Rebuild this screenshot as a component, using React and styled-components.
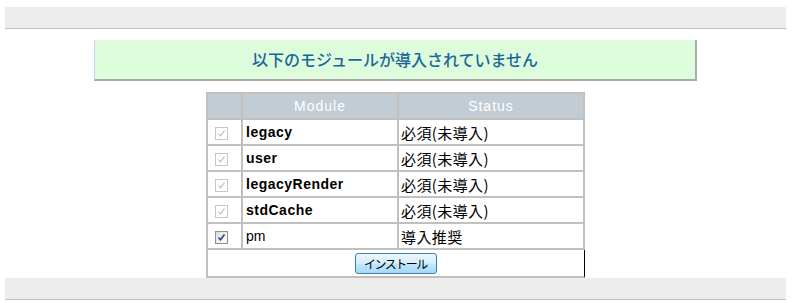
import styled, { createGlobalStyle } from "styled-components";

const GlobalStyle = createGlobalStyle`
  body {
    margin: 0;
    background: #ffffff;
    font-family: "Liberation Sans", "Noto Sans CJK JP", sans-serif;
  }
`;

const Page = styled.div`
  padding: 7px 6px 0 5px;
`;

const Bar = styled.div`
  height: 21px;
  background: #ededed;
  border-bottom: 1px solid #bdbdbd;
`;

const Content = styled.div`
  display: flex;
  flex-direction: column;
  align-items: center;
  padding-top: 11px;
`;

const Notice = styled.div`
  box-sizing: border-box;
  width: 603px;
  height: 41px;
  display: flex;
  align-items: center;
  justify-content: center;
  background: #dcfcdc;
  border-left: 1px solid #ccccff;
  border-right: 2px solid #aaaaaa;
  border-bottom: 2px solid #aaaaaa;
  color: #1a6699;
  font-family: "Noto Sans CJK JP", sans-serif;
  font-size: 16px;
  font-weight: 500;
  letter-spacing: 0;
  padding-bottom: 1px;
`;

const Table = styled.table`
  margin-top: 11px;
  border-collapse: separate;
  border-spacing: 0;
  border-top: 2px solid #c0c0c0;
  border-left: 2px solid #c0c0c0;
`;

const Th = styled.th`
  height: 24px;
  padding: 0;
  width: ${(p) => p.$w}px;
  background: #c2ccd5;
  color: #ffffff;
  font-family: "Liberation Sans", sans-serif;
  font-size: 14px;
  font-weight: normal;
  letter-spacing: 1px;
  text-align: center;
  border-right: 2px solid #c0c0c0;
  border-bottom: 2px solid #c0c0c0;
`;

const Td = styled.td`
  height: 24px;
  padding: 0 0 0 ${(p) => p.$pad ?? 3}px;
  border-right: 2px solid #c0c0c0;
  border-bottom: 2px solid #c0c0c0;
  font-family: "Liberation Sans", sans-serif;
  font-size: 14px;
  letter-spacing: ${(p) => (p.$bold ? "0.5px" : "0")};
  font-weight: ${(p) => (p.$bold ? "bold" : "normal")};
  color: #000000;
  vertical-align: middle;
`;

const StatusTd = styled(Td)`
  font-family: "Noto Sans CJK JP", sans-serif;
  font-size: 15px;
  padding-left: 2px;
  letter-spacing: 0.4px;
`;

const ButtonTd = styled.td`
  height: 26px;
  padding: 0 1px 0 0;
  text-align: center;
  border-right: 1px solid #000000;
  border-bottom: 2px solid #c0c0c0;
  vertical-align: middle;
`;

const Box = styled.span`
  display: inline-flex;
  align-items: center;
  justify-content: center;
  box-sizing: border-box;
  width: 13px;
  height: 13px;
  margin-left: 2px;
  margin-top: 2px;
  vertical-align: middle;
  border: 1px solid ${(p) => (p.$on ? "#8e8f8f" : "#c6c6c6")};
  background: ${(p) =>
    p.$on ? "linear-gradient(135deg, #dcdcdc, #ffffff)" : "#ffffff"};
`;

const Button = styled.button`
  width: 82px;
  height: 21px;
  padding: 0 0 1px;
  border: 1px solid #3c7fb1;
  border-radius: 3px;
  background: linear-gradient(#eaf6fd 0%, #d9f0fc 45%, #bee6fd 55%, #a7d9f5 100%);
  font-family: "Noto Sans CJK JP", sans-serif;
  font-size: 12px;
  letter-spacing: -1.5px;
  color: #000000;
  margin-top: 1px;
`;

const Footer = styled.div`
  height: 21px;
  background: #ededed;
  border-bottom: 1px solid #c0c0c0;
`;

const Check = ({ on }) => (
  <Box $on={on}>
    <svg width="9" height="9" viewBox="0 0 9 9">
      <path
        d="M1.5 4.5 L3.5 6.8 L7.5 1.5"
        fill="none"
        stroke={on ? "#2c3e8c" : "#b9b9b9"}
        strokeWidth={on ? 1.6 : 1.1}
      />
    </svg>
  </Box>
);

const modules = [
  { name: "legacy", status: "必須(未導入)", required: true },
  { name: "user", status: "必須(未導入)", required: true },
  { name: "legacyRender", status: "必須(未導入)", required: true },
  { name: "stdCache", status: "必須(未導入)", required: true },
  { name: "pm", status: "導入推奨", required: false },
];

export default function App() {
  return (
    <>
      <GlobalStyle />
      <Page>
        <Bar />
        <Content>
          <Notice>以下のモジュールが導入されていません</Notice>
          <Table>
            <thead>
              <tr>
                <Th $w={33} />
                <Th $w={154}>Module</Th>
                <Th $w={184}>Status</Th>
              </tr>
            </thead>
            <tbody>
              {modules.map((m) => (
                <tr key={m.name}>
                  <Td $pad={5}>
                    <Check on={!m.required} />
                  </Td>
                  <Td $bold={m.required}>{m.name}</Td>
                  <StatusTd>{m.status}</StatusTd>
                </tr>
              ))}
              <tr>
                <ButtonTd colSpan={3}>
                  <Button>インストール</Button>
                </ButtonTd>
              </tr>
            </tbody>
          </Table>
        </Content>
        <Footer />
      </Page>
    </>
  );
}
